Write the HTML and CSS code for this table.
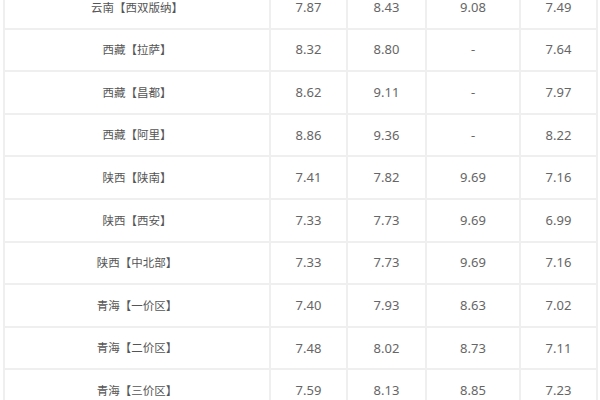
FILE: index.html
```html
<!DOCTYPE html>
<html lang="zh">
<head>
<meta charset="utf-8">
<link rel="stylesheet" href="styles.css">
</head>
<body>
<div class="frame">
<table class="price">
<colgroup><col class="c1"><col class="c2"><col class="c3"><col class="c4"><col class="c5"></colgroup>
<tbody>
<tr><td class="name">云南【西双版纳】</td><td>7.87</td><td>8.43</td><td>9.08</td><td>7.49</td></tr>
<tr><td class="name">西藏【拉萨】</td><td>8.32</td><td>8.80</td><td>-</td><td>7.64</td></tr>
<tr><td class="name">西藏【昌都】</td><td>8.62</td><td>9.11</td><td>-</td><td>7.97</td></tr>
<tr><td class="name">西藏【阿里】</td><td>8.86</td><td>9.36</td><td>-</td><td>8.22</td></tr>
<tr><td class="name">陕西【陕南】</td><td>7.41</td><td>7.82</td><td>9.69</td><td>7.16</td></tr>
<tr><td class="name">陕西【西安】</td><td>7.33</td><td>7.73</td><td>9.69</td><td>6.99</td></tr>
<tr><td class="name">陕西【中北部】</td><td>7.33</td><td>7.73</td><td>9.69</td><td>7.16</td></tr>
<tr><td class="name">青海【一价区】</td><td>7.40</td><td>7.93</td><td>8.63</td><td>7.02</td></tr>
<tr><td class="name">青海【二价区】</td><td>7.48</td><td>8.02</td><td>8.73</td><td>7.11</td></tr>
<tr><td class="name">青海【三价区】</td><td>7.59</td><td>8.13</td><td>8.85</td><td>7.23</td></tr>
</tbody>
</table>
</div>
</body>
</html>
```
FILE: styles.css
```css
html, body {
  margin: 0;
  padding: 0;
  background: #fff;
}
.frame {
  width: 600px;
  height: 400px;
  overflow: hidden;
  padding-left: 3px;
  box-sizing: border-box;
}
.price {
  border-collapse: collapse;
  table-layout: fixed;
  width: 594px;
  margin-top: -15px;
  font-family: "Noto Sans", "Noto Sans CJK SC", sans-serif;
  font-size: 13px;
  color: #666;
}
.c1 { width: 266px; }
.c2 { width: 77px; }
.c3 { width: 79px; }
.c4 { width: 94px; }
.c5 { width: 77px; }
.price td {
  border: 2px solid #efefef;
  height: 42.6px;
  padding: 0;
  box-sizing: border-box;
  text-align: center;
  vertical-align: middle;
  line-height: 1;
}
.price td.name {
  font-family: "Noto Sans CJK SC", sans-serif;
  font-size: 11.5px;
  color: #555;
}
```
